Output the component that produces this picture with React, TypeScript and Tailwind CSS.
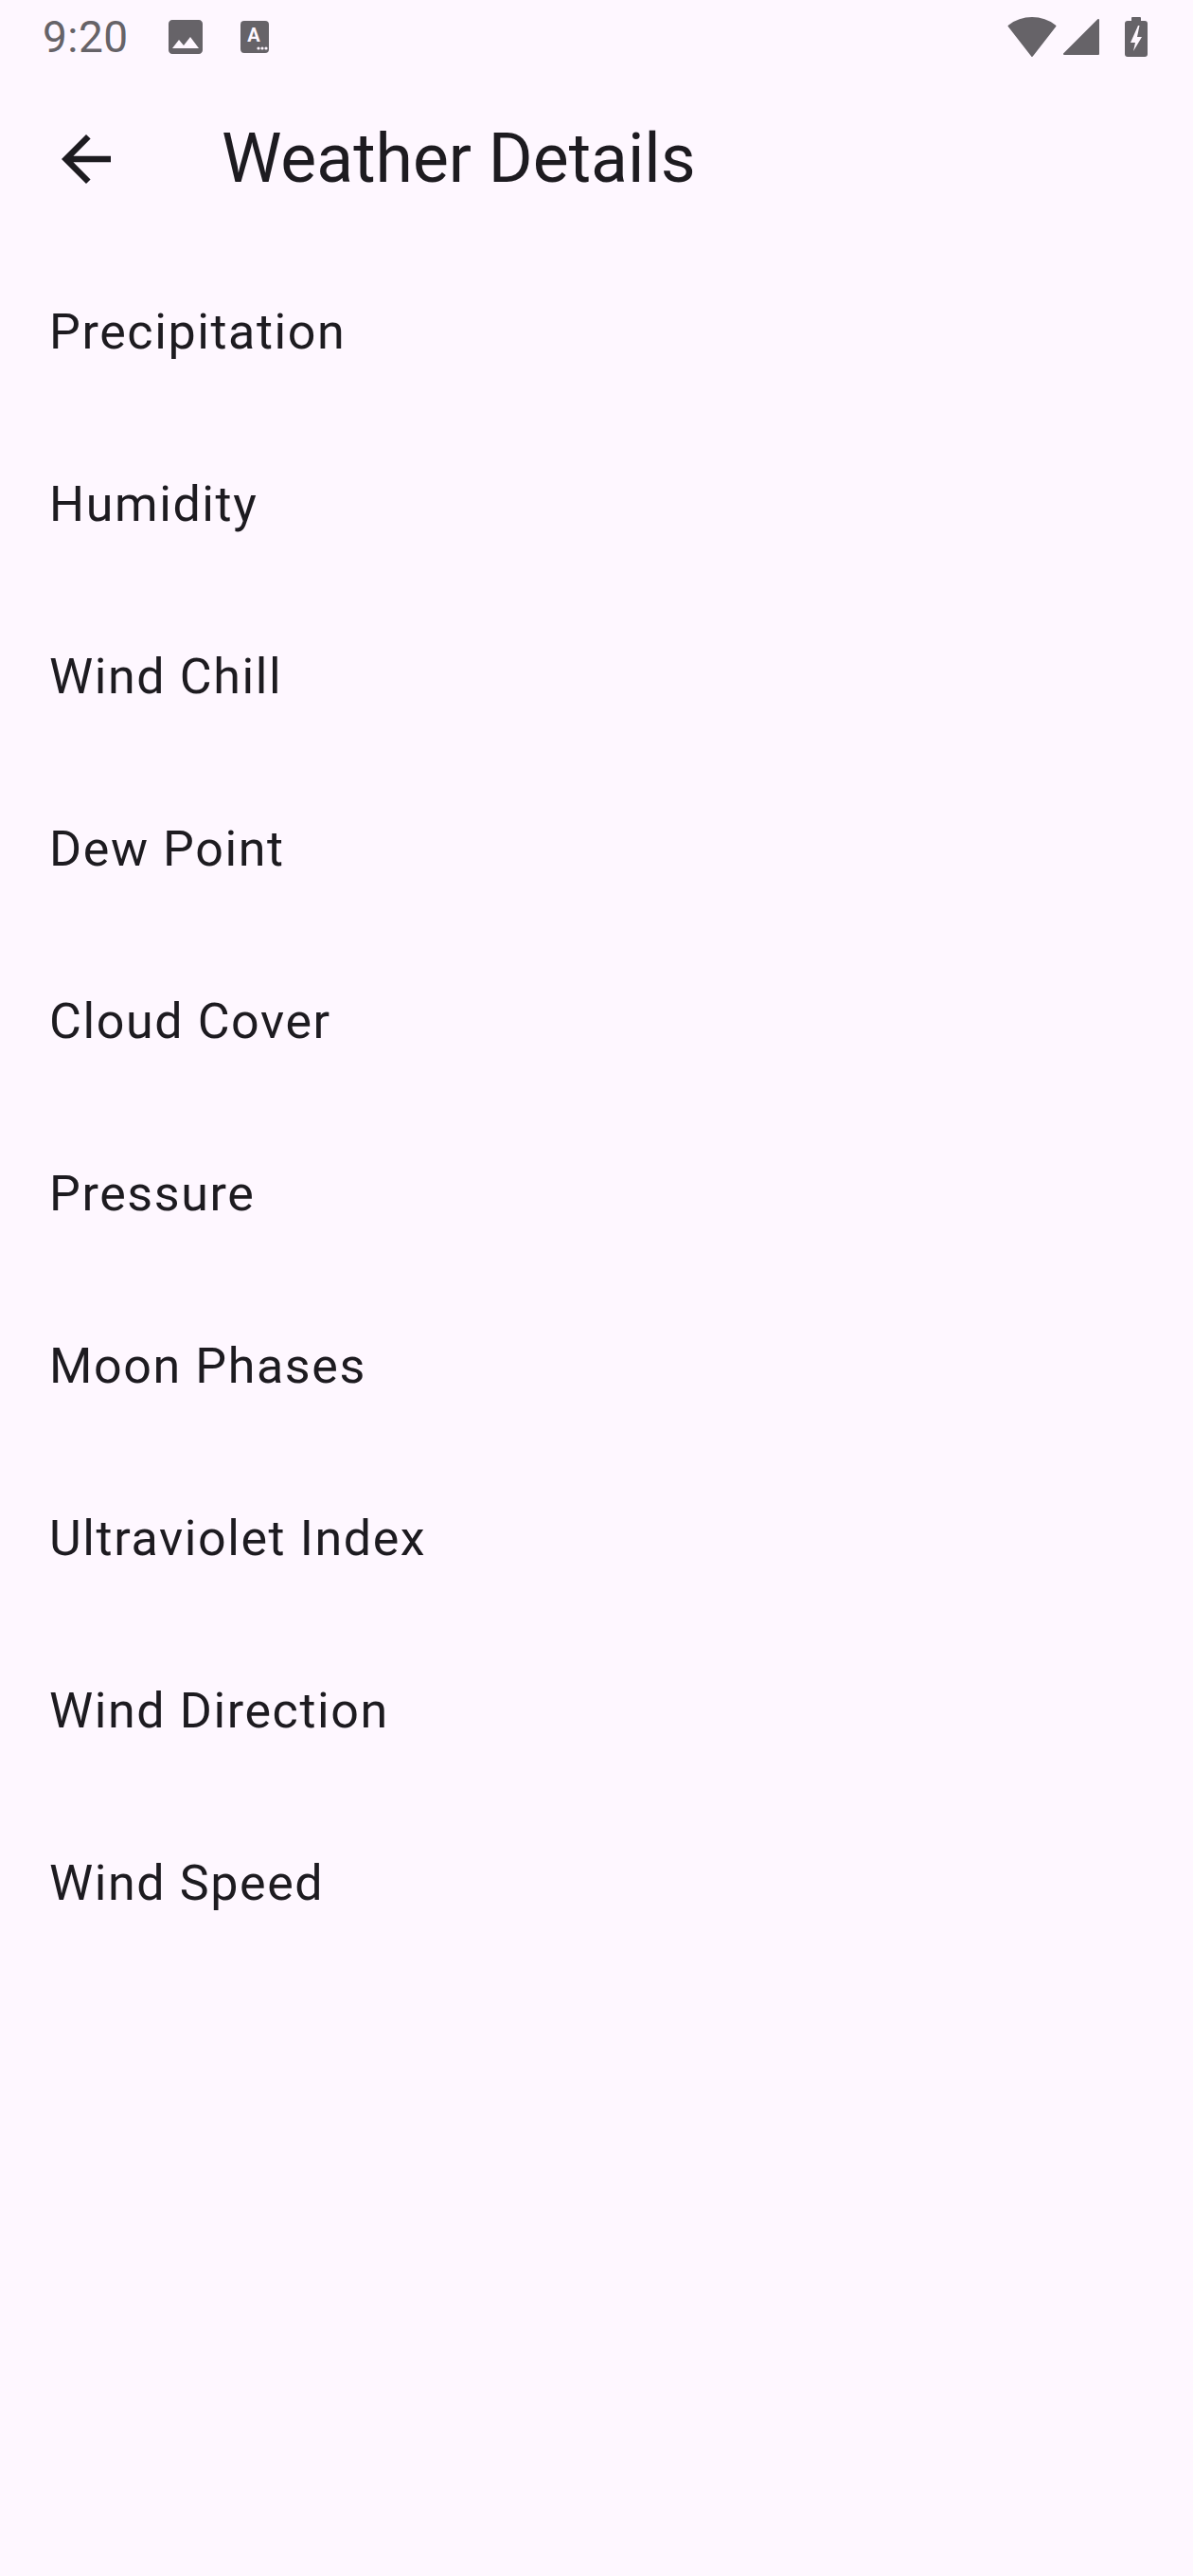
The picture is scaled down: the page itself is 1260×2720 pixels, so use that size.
const ITEMS = [
  'Precipitation',
  'Humidity',
  'Wind Chill',
  'Dew Point',
  'Cloud Cover',
  'Pressure',
  'Moon Phases',
  'Ultraviolet Index',
  'Wind Direction',
  'Wind Speed',
];

function StatusBar() {
  return (
    <div className="h-[78px] flex items-center justify-between text-[#666368]">
      <div className="flex items-center">
        <span className="ml-[45px] text-[46px] leading-none tracking-[0.5px]">9:20</span>
        {/* gallery notification */}
        <svg className="ml-[36px]" width="48" height="48" viewBox="0 0 24 24" fill="currentColor">
          <path d="M21 19V5c0-1.1-.9-2-2-2H5c-1.1 0-2 .9-2 2v14c0 1.1.9 2 2 2h14c1.1 0 2-.9 2-2zM8.5 13.5l2.5 3.01L14.5 12l4.5 6H5l3.5-4.5z" />
        </svg>
        {/* text app notification */}
        <svg className="ml-[33px]" width="32" height="36" viewBox="0 0 32 36">
          <rect x="1" y="1" width="30" height="34" rx="4" fill="currentColor" />
          <text x="15" y="23" textAnchor="middle" fontFamily="Roboto, sans-serif" fontWeight="700" fontSize="20" fill="#fef7ff">A</text>
          <circle cx="20" cy="30" r="1.6" fill="#fef7ff" />
          <circle cx="24" cy="30" r="1.6" fill="#fef7ff" />
          <circle cx="28" cy="30" r="1.6" fill="#fef7ff" />
        </svg>
      </div>
      <div className="flex items-center mr-[47px]">
        <svg width="52" height="44" viewBox="0 0 52 44" fill="currentColor" stroke="currentColor" strokeWidth="2" strokeLinejoin="round">
          <path d="M26 42 L1.5 10.5 A40 40 0 0 1 50.5 10.5 Z" />
        </svg>
        <svg className="ml-[6px]" width="40" height="40" viewBox="0 0 40 40" fill="currentColor" stroke="currentColor" strokeWidth="2" strokeLinejoin="round">
          <path d="M2 38 L38 2 L38 38 Z" />
        </svg>
        <svg className="ml-[25px]" width="26" height="44" viewBox="0 0 26 44" fill="currentColor">
          <rect x="8" y="1" width="10" height="6" rx="1" />
          <rect x="1" y="5" width="24" height="38" rx="3" />
          <path d="M15 10 L7 28 L12 28 L10 37 L19 22 L14 22 L16.5 10 Z" fill="#fef7ff" />
        </svg>
      </div>
    </div>
  );
}

export default function App() {
  return (
    <main className="min-h-[2720px] w-[1260px] bg-[#fef7ff] text-[#1d1b20]" style={{ fontFamily: 'Roboto, "Noto Sans", sans-serif' }}>
      <StatusBar />

      {/* Top app bar */}
      <header className="h-[180px] flex items-center">
        <button className="ml-[13px] w-[156px] h-[156px] flex items-center justify-center">
          <svg width="78" height="78" viewBox="0 0 24 24" fill="currentColor">
            <path d="M20 11H7.83l5.59-5.59L12 4l-8 8 8 8 1.41-1.41L7.83 13H20v-2z" />
          </svg>
        </button>
        <h1 className="ml-[65px] text-[71.5px] leading-none">Weather Details</h1>
      </header>

      {/* Detail list */}
      <ul>
        {ITEMS.map((item) => (
          <li key={item} className="h-[182px] flex items-center pl-[52px] pt-[3px] text-[52px] tracking-[1.6px]">
            {item}
          </li>
        ))}
      </ul>
    </main>
  );
}
